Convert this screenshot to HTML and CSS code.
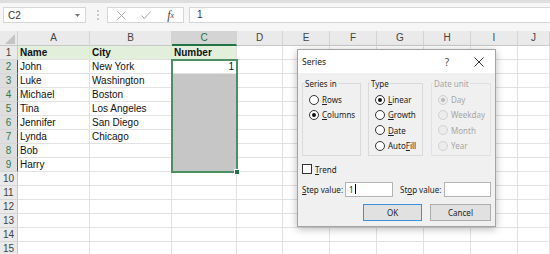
FILE: index.html
```html
<!DOCTYPE html>
<html lang="en">
<head>
<meta charset="UTF-8">
<title>Series - Excel</title>
<link rel="stylesheet" href="styles.css">
</head>
<body>
<div class="app">
	<div class="topband"></div>
	<div class="toolbar">
		<div class="namebox"><span>C2</span><svg class="dd" width="5" height="3" viewBox="0 0 5 3"><path d="M0 0h5L2.5 3z" fill="#777"/></svg></div>
		<div class="grip"></div>
		<div class="fxbox">
			<span class="tool"><svg width="9" height="9" viewBox="0 0 9 9"><path d="M0.5 0.5l8 8M8.5 0.5l-8 8" stroke="#a8a8a8" stroke-width="1" fill="none"/></svg></span>
			<span class="tool"><svg width="10" height="8" viewBox="0 0 10 8"><path d="M0.5 4.5l3 3 6-7" stroke="#a8a8a8" stroke-width="1" fill="none"/></svg></span>
			<span class="tool fx">f<sub>x</sub></span>
		</div>
		<div class="formula">1</div>
	</div>

	<div class="sheet">
		<div class="corner"><svg width="10" height="10" viewBox="0 0 10 10"><path d="M10 0v10H0z" fill="#c4c4c4"/></svg></div>
		<div class="ch">A</div><div class="ch">B</div><div class="ch on">C</div><div class="ch">D</div><div class="ch">E</div><div class="ch">F</div><div class="ch">G</div><div class="ch">H</div><div class="ch">I</div><div class="ch">J</div>

		<div class="rh">1</div><div class="hd">Name</div><div class="hd">City</div><div class="hd">Number</div><div></div><div></div><div></div><div></div><div></div><div></div><div></div>
		<div class="rh on">2</div><div>John</div><div>New York</div><div class="num">1</div><div></div><div></div><div></div><div></div><div></div><div></div><div></div>
		<div class="rh on">3</div><div>Luke</div><div>Washington</div><div class="sel"></div><div></div><div></div><div></div><div></div><div></div><div></div><div></div>
		<div class="rh on">4</div><div>Michael</div><div>Boston</div><div class="sel"></div><div></div><div></div><div></div><div></div><div></div><div></div><div></div>
		<div class="rh on">5</div><div>Tina</div><div>Los Angeles</div><div class="sel"></div><div></div><div></div><div></div><div></div><div></div><div></div><div></div>
		<div class="rh on">6</div><div>Jennifer</div><div>San Diego</div><div class="sel"></div><div></div><div></div><div></div><div></div><div></div><div></div><div></div>
		<div class="rh on">7</div><div>Lynda</div><div>Chicago</div><div class="sel"></div><div></div><div></div><div></div><div></div><div></div><div></div><div></div>
		<div class="rh on">8</div><div>Bob</div><div></div><div class="sel"></div><div></div><div></div><div></div><div></div><div></div><div></div><div></div>
		<div class="rh on">9</div><div>Harry</div><div></div><div class="sel"></div><div></div><div></div><div></div><div></div><div></div><div></div><div></div>
		<div class="rh">10</div><div></div><div></div><div></div><div></div><div></div><div></div><div></div><div></div><div></div><div></div>
		<div class="rh">11</div><div></div><div></div><div></div><div></div><div></div><div></div><div></div><div></div><div></div><div></div>
		<div class="rh">12</div><div></div><div></div><div></div><div></div><div></div><div></div><div></div><div></div><div></div><div></div>
		<div class="rh">13</div><div></div><div></div><div></div><div></div><div></div><div></div><div></div><div></div><div></div><div></div>
		<div class="rh">14</div><div></div><div></div><div></div><div></div><div></div><div></div><div></div><div></div><div></div><div></div>
		<div class="rh">15</div><div></div><div></div><div></div><div></div><div></div><div></div><div></div><div></div><div></div><div></div>
	</div>

	<div class="selection"><span class="handle"></span></div>

	<div class="dialog">
		<div class="dlg-title">
			<span class="dlg-name">Series</span>
			<span class="help">?</span>
			<svg class="close" width="10" height="10" viewBox="0 0 10 10"><path d="M0.5 0.5l9 9M9.5 0.5l-9 9" stroke="#333" stroke-width="1" fill="none"/></svg>
		</div>
		<div class="dlg-body">
			<div class="groups">
				<fieldset class="grp g-in">
					<legend>Series in</legend>
					<div class="opt"><span class="radio"></span><span><u>R</u>ows</span></div>
					<div class="opt"><span class="radio on"></span><span><u>C</u>olumns</span></div>
				</fieldset>
				<fieldset class="grp g-type">
					<legend>Type</legend>
					<div class="opt"><span class="radio on"></span><span><u>L</u>inear</span></div>
					<div class="opt"><span class="radio"></span><span><u>G</u>rowth</span></div>
					<div class="opt"><span class="radio"></span><span><u>D</u>ate</span></div>
					<div class="opt"><span class="radio"></span><span>Auto<u>F</u>ill</span></div>
				</fieldset>
				<fieldset class="grp g-date off">
					<legend>Date unit</legend>
					<div class="opt"><span class="radio on"></span><span>Day</span></div>
					<div class="opt"><span class="radio"></span><span>Weekday</span></div>
					<div class="opt"><span class="radio"></span><span>Month</span></div>
					<div class="opt"><span class="radio"></span><span>Year</span></div>
				</fieldset>
			</div>
			<div class="trend"><span class="check"></span><span><u>T</u>rend</span></div>
			<div class="steps">
				<span class="lbl"><u>S</u>tep value:</span>
				<div class="field">1<span class="cursor"></span></div>
				<span class="lbl stop">St<u>o</u>p value:</span>
				<div class="field last"></div>
			</div>
			<div class="buttons">
				<div class="btn default">OK</div>
				<div class="btn">Cancel</div>
			</div>
		</div>
	</div>
</div>
</body>
</html>
```

FILE: styles.css
```css
body {
	margin: 0;
	font-family: "Liberation Sans", Arial, sans-serif;
	font-size: 10px;
	color: #111;
	background: #fff;
}

.app {
	position: relative;
	width: 550px;
	height: 254px;
	overflow: hidden;
}

.topband {
	height: 3px;
	background: #dedede;
}

/* formula bar */
.toolbar {
	display: flex;
	align-items: flex-start;
	box-sizing: border-box;
	height: 28px;
	padding-top: 4px;
	background: #f6f6f6;
}
.namebox {
	display: flex;
	align-items: center;
	justify-content: space-between;
	box-sizing: border-box;
	width: 83px;
	height: 16px;
	margin-left: 3px;
	padding: 0 5px 0 4px;
	background: #fff;
	border: 1px solid #d6d6d6;
	color: #333;
}
.grip {
	width: 0;
	height: 10px;
	margin: 3px 0 0 11px;
	border-left: 2px dotted #c8c8c8;
}
.fxbox {
	display: flex;
	align-items: center;
	box-sizing: border-box;
	width: 77px;
	height: 16px;
	margin-left: 8px;
	padding-left: 1px;
	background: #fff;
	border: 1px solid #d6d6d6;
}
.tool {
	display: flex;
	align-items: center;
	justify-content: center;
	width: 26px;
	height: 14px;
}
.fx {
	font-family: "Liberation Serif", serif;
	font-style: italic;
	font-size: 12px;
	color: #444;
}
.fx sub {
	font-size: 8px;
	vertical-align: -1px;
}
.formula {
	flex: 1;
	box-sizing: border-box;
	height: 16px;
	margin-left: 5px;
	padding-left: 7px;
	line-height: 14px;
	background: #fff;
	border: 1px solid #d6d6d6;
	border-right: none;
	color: #333;
}

/* grid */
.sheet {
	display: grid;
	grid-template-columns: 18px 72px 82px 65px 46px repeat(5, 47px) 1fr;
	grid-template-rows: 15px;
	grid-auto-rows: 14px;
}
.sheet > div {
	box-sizing: border-box;
	padding: 0 2px;
	border-right: 1px solid #e2e2e2;
	border-bottom: 1px solid #e2e2e2;
	line-height: 13px;
	white-space: nowrap;
	overflow: hidden;
}
.sheet > .corner {
	display: flex;
	align-items: flex-end;
	justify-content: flex-end;
	padding: 0 2px 1px 0;
	background: #eaeaea;
	border-right-color: #d0d0d0;
	border-bottom-color: #c8c8c8;
}
.sheet > .ch {
	background: #eaeaea;
	border-right-color: #d4d4d4;
	border-bottom-color: #c8c8c8;
	text-align: center;
	line-height: 14px;
	color: #444;
}
.sheet > .ch.on {
	background: #d4d4d4;
	border-bottom: 2px solid #217346;
	color: #217346;
}
.sheet > .rh {
	padding: 0;
	background: #eaeaea;
	border-right-color: #c8c8c8;
	border-bottom-color: #d6d6d6;
	text-align: center;
	color: #444;
}
.sheet > .rh.on {
	background: #dedede;
	border-right: 1px solid #217346;
	color: #2f7a4c;
}
.sheet > .hd {
	background: #e2efda;
	font-weight: bold;
	color: #111;
}
.sheet > .sel {
	background: #c6c6c6;
	border-bottom-color: #c6c6c6;
}
.sheet > .num {
	text-align: right;
}

.selection {
	position: absolute;
	left: 171px;
	top: 59px;
	box-sizing: border-box;
	width: 67px;
	height: 114px;
	border: 2px solid #4b8f62;
}
.handle {
	position: absolute;
	right: -4px;
	bottom: -4px;
	width: 4px;
	height: 4px;
	background: #217346;
	border: 1px solid #fff;
}

/* Series dialog */
.dialog {
	position: absolute;
	left: 297px;
	top: 49px;
	box-sizing: border-box;
	width: 199px;
	height: 178px;
	background: #f0f0f0;
	border: 1px solid #a4a4a4;
	box-shadow: 0 2px 8px rgba(0, 0, 0, 0.28);
	font-family: "Noto Sans", "Open Sans", sans-serif;
	font-size: 8px;
	color: #222;
}
.dlg-title {
	display: flex;
	align-items: center;
	height: 23px;
	padding-left: 4px;
	background: #fff;
	font-size: 8.5px;
}
.dlg-name {
	flex: 1;
}
.help {
	margin-right: 25px;
	font-size: 10px;
	color: #444;
}
.close {
	margin-right: 11px;
}

.dlg-body {
	padding: 5px 4px 0 4px;
}
.groups {
	display: flex;
}
.grp {
	box-sizing: border-box;
	min-width: 0;
	height: 78px;
	margin: 0;
	padding: 3px 4px 0 6px;
	border: 1px solid #dadada;
}
.grp legend {
	margin-left: -5px;
	padding: 0 1px;
	line-height: 11px;
}
.g-in {
	width: 59px;
}
.g-type {
	width: 55px;
	margin-left: 7px;
}
.g-date {
	width: 60px;
	margin-left: 8px;
}
.grp.off {
	border-color: #e2e2e2;
	color: #a6a6a6;
}
.opt {
	display: flex;
	align-items: center;
	height: 15.3px;
	white-space: nowrap;
}
.radio {
	box-sizing: border-box;
	width: 10px;
	height: 10px;
	margin-right: 3px;
	flex: none;
	display: flex;
	align-items: center;
	justify-content: center;
	background: #fff;
	border: 1px solid #333;
	border-radius: 50%;
}
.radio.on::after {
	content: "";
	width: 4px;
	height: 4px;
	border-radius: 50%;
	background: #111;
}
.off .radio {
	background: #ececec;
	border-color: #d2d2d2;
}
.off .radio.on::after {
	background: #b8b8b8;
}

.trend {
	display: flex;
	align-items: center;
	height: 12px;
	margin-top: 7px;
}
.check {
	box-sizing: border-box;
	width: 10px;
	height: 10px;
	margin-right: 3px;
	background: #fff;
	border: 1px solid #333;
}

.steps {
	display: flex;
	align-items: center;
	height: 15px;
	margin-top: 7px;
}
.lbl {
	width: 43px;
}
.lbl.stop {
	width: 44px;
	margin-left: 7px;
}
.field {
	box-sizing: border-box;
	width: 48px;
	height: 15px;
	padding-left: 3px;
	line-height: 13px;
	background: #fff;
	border: 1px solid #b4b4b4;
}
.field.last {
	width: 47px;
}
.cursor {
	display: inline-block;
	width: 1px;
	height: 10px;
	margin-left: 1px;
	vertical-align: -1px;
	background: #000;
}

.buttons {
	display: flex;
	justify-content: flex-end;
	gap: 8px;
	margin-top: 7px;
}
.btn {
	box-sizing: border-box;
	width: 61px;
	height: 17px;
	line-height: 15px;
	text-align: center;
	background: #e1e1e1;
	border: 1px solid #adadad;
}
.btn.default {
	width: 59px;
	border-color: #3c8fd8;
}
```
